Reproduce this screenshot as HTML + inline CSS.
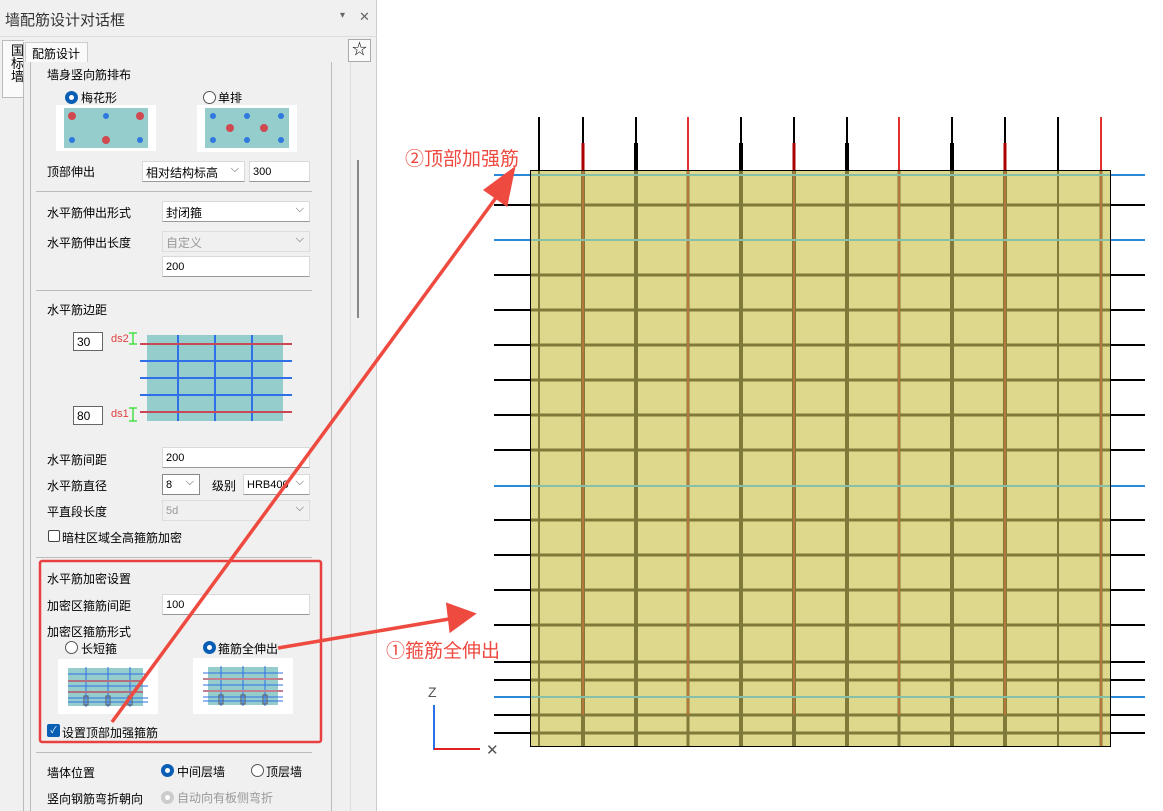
<!DOCTYPE html>
<html><head><meta charset="utf-8"><style>
*{margin:0;padding:0;box-sizing:border-box}
body{width:1163px;height:811px;overflow:hidden;background:#fff;font-family:"Liberation Sans","Noto Sans CJK SC",sans-serif;font-size:12px;color:#000;position:relative}
.a{position:absolute;white-space:nowrap}
.in{position:absolute;background:#fff;border:1px solid #d9d9d9;border-bottom:1px solid #999;height:21px;font-size:11px;padding:4px 3px 0;color:#000}
.dis{background:#f0f0f0;color:#999;border-color:#ddd}
.sel::after{content:"⌵";position:absolute;right:5px;top:1px;color:#555;font-size:11px}
.hr{position:absolute;left:36px;width:276px;height:1px;background:#bbb}
.rb{position:absolute;width:13px;height:13px;border-radius:50%;border:1px solid #555;background:#fff}
.rb.on{border:4px solid #0a5fb4}
</style></head><body>
<div class="a" style="left:0;top:0;width:377px;height:811px;background:#f0f0f0;border-right:1px solid #ccc"></div>
<div class="a" style="left:5px;top:9px;font-size:15px;color:#333">墙配筋设计对话框</div>
<div class="a" style="left:340px;top:10px;font-size:10px;color:#666">▾</div>
<div class="a" style="left:359px;top:9px;font-size:13px;color:#666">✕</div>
<div class="a" style="left:0;top:36px;width:377px;height:1px;background:#ddd"></div>
<div class="a" style="left:2px;top:40px;width:22px;height:58px;border:1px solid #bbb;border-right:none;background:#fafafa;font-size:13px;line-height:13px;padding:3px 0 0 8px;white-space:normal">国<br>标<br>墙</div>
<div class="a" style="left:23px;top:42px;width:1px;height:769px;background:#bbb"></div>
<div class="a" style="left:25px;top:42px;width:63px;height:20px;border:1px solid #ccc;border-bottom:none;background:#fafafa;font-size:12px;padding:2px 0 0 6px">配筋设计</div>
<div class="a" style="left:30px;top:62px;width:1px;height:749px;background:#bbb"></div>
<div class="a" style="left:331px;top:62px;width:1px;height:749px;background:#bbb"></div>
<div class="a" style="left:348px;top:39px;width:23px;height:23px;border:1px solid #aaa;background:#fafafa;font-size:15px;text-align:center;line-height:20px">☆</div>
<div class="a" style="left:350px;top:62px;width:1px;height:749px;background:#ddd"></div>
<div class="a" style="left:357px;top:160px;width:2px;height:158px;background:#888"></div>

<div class="a" style="left:47px;top:66px">墙身竖向筋排布</div>
<div class="rb on" style="left:65px;top:91px"></div><div class="a" style="left:81px;top:89px">梅花形</div>
<div class="rb" style="left:203px;top:91px"></div><div class="a" style="left:218px;top:89px">单排</div>
<svg class="a" style="left:56px;top:105px" width="100" height="46"><rect width="100" height="46" fill="#fff"/><rect x="8" y="3" width="84" height="40" fill="#95cdcd"/><g fill="#d04850"><circle cx="16" cy="11" r="4"/><circle cx="84" cy="11" r="4"/><circle cx="50" cy="35" r="4"/></g><g fill="#2f78e0"><circle cx="50" cy="11" r="3"/><circle cx="16" cy="35" r="3"/><circle cx="84" cy="35" r="3"/></g></svg>
<svg class="a" style="left:197px;top:105px" width="100" height="47"><rect width="100" height="47" fill="#fff"/><rect x="8" y="3" width="84" height="40" fill="#95cdcd"/><g fill="#2f78e0"><circle cx="16" cy="11" r="3"/><circle cx="50" cy="11" r="3"/><circle cx="84" cy="11" r="3"/><circle cx="16" cy="35" r="3"/><circle cx="50" cy="35" r="3"/><circle cx="84" cy="35" r="3"/></g><g fill="#d04850"><circle cx="33" cy="23" r="4"/><circle cx="67" cy="23" r="4"/></g></svg>
<div class="a" style="left:47px;top:163px">顶部伸出</div>
<div class="in sel" style="left:142px;top:161px;width:103px;font-size:12px;padding-top:2px">相对结构标高</div>
<div class="in" style="left:249px;top:161px;width:61px">300</div>
<div class="hr" style="top:191px"></div>
<div class="a" style="left:47px;top:204px">水平筋伸出形式</div>
<div class="in sel" style="left:162px;top:201px;width:148px;font-size:12px;padding-top:2px">封闭箍</div>
<div class="a" style="left:47px;top:234px">水平筋伸出长度</div>
<div class="in sel dis" style="left:162px;top:231px;width:148px;font-size:12px;padding-top:2px">自定义</div>
<div class="in" style="left:162px;top:256px;width:148px">200</div>
<div class="hr" style="top:290px"></div>
<div class="a" style="left:47px;top:301px">水平筋边距</div>
<div class="a" style="left:73px;top:332px;width:30px;height:19px;border:1px solid #666;background:#fff;font-size:12px;padding:2px 3px">30</div>
<div class="a" style="left:73px;top:406px;width:30px;height:19px;border:1px solid #666;background:#fff;font-size:12px;padding:2px 3px">80</div>
<div class="a" style="left:111px;top:333px;color:#e04040;font-size:11px">ds2</div>
<div class="a" style="left:111px;top:408px;color:#e04040;font-size:11px">ds1</div>
<svg class="a" style="left:125px;top:330px" width="170" height="95"><rect x="22" y="5" width="136" height="86" fill="#95cdcd"/><g stroke="#2f6fe8" stroke-width="2"><line x1="53" y1="5" x2="53" y2="91"/><line x1="90" y1="5" x2="90" y2="91"/><line x1="127" y1="5" x2="127" y2="91"/><line x1="15" y1="31" x2="167" y2="31"/><line x1="15" y1="48" x2="167" y2="48"/><line x1="15" y1="65" x2="167" y2="65"/></g><g stroke="#c84858" stroke-width="2"><line x1="15" y1="14" x2="167" y2="14"/><line x1="15" y1="82" x2="167" y2="82"/></g><g stroke="#22dd22" stroke-width="1.2"><line x1="8" y1="3" x2="8" y2="14"/><line x1="4" y1="3" x2="12" y2="3"/><line x1="4" y1="14" x2="12" y2="14"/><line x1="8" y1="78" x2="8" y2="91"/><line x1="4" y1="78" x2="12" y2="78"/><line x1="4" y1="91" x2="12" y2="91"/></g></svg>
<div class="a" style="left:47px;top:451px">水平筋间距</div>
<div class="in" style="left:162px;top:447px;width:148px">200</div>
<div class="a" style="left:47px;top:477px">水平筋直径</div>
<div class="in sel" style="left:162px;top:474px;width:38px;border:1px solid #888">8</div>
<div class="a" style="left:212px;top:477px">级别</div>
<div class="in sel" style="left:243px;top:474px;width:67px">HRB400</div>
<div class="a" style="left:47px;top:503px">平直段长度</div>
<div class="in sel dis" style="left:162px;top:500px;width:148px">5d</div>
<div class="a" style="left:48px;top:530px;width:12px;height:12px;border:1px solid #444;border-radius:2px;background:#fff"></div>
<div class="a" style="left:62px;top:529px">暗柱区域全高箍筋加密</div>
<div class="hr" style="top:557px"></div>
<div class="a" style="left:47px;top:570px">水平筋加密设置</div>
<div class="a" style="left:47px;top:597px">加密区箍筋间距</div>
<div class="in" style="left:162px;top:594px;width:148px">100</div>
<div class="a" style="left:47px;top:623px">加密区箍筋形式</div>
<div class="rb" style="left:65px;top:641px"></div><div class="a" style="left:81px;top:640px">长短箍</div>
<div class="rb on" style="left:203px;top:641px"></div><div class="a" style="left:218px;top:640px">箍筋全伸出</div>
<svg class="a" style="left:58px;top:659px" width="100" height="55"><rect width="100" height="55" fill="#fff"/><rect x="10" y="9" width="75" height="38" fill="#95cdcd"/><g stroke="#2f6fe8" stroke-width="1"><line x1="28" y1="8" x2="28" y2="48"/><line x1="50" y1="8" x2="50" y2="48"/><line x1="72" y1="8" x2="72" y2="48"/><line x1="10" y1="15" x2="90" y2="15"/><line x1="10" y1="27" x2="90" y2="27"/><line x1="10" y1="39" x2="90" y2="39"/><line x1="10" y1="43" x2="90" y2="43"/></g><g stroke="#b07080" stroke-width="2"><line x1="10" y1="22" x2="85" y2="22"/><line x1="10" y1="33" x2="85" y2="33"/></g><g fill="none" stroke="#556"><rect x="26" y="37" width="4" height="9"/><rect x="48" y="37" width="4" height="9"/><rect x="70" y="37" width="4" height="9"/></g></svg>
<svg class="a" style="left:193px;top:658px" width="100" height="56"><rect width="100" height="56" fill="#fff"/><rect x="15" y="9" width="70" height="38" fill="#95cdcd"/><g stroke="#2f6fe8" stroke-width="1"><line x1="28" y1="8" x2="28" y2="48"/><line x1="50" y1="8" x2="50" y2="48"/><line x1="72" y1="8" x2="72" y2="48"/><line x1="10" y1="15" x2="90" y2="15"/><line x1="10" y1="27" x2="90" y2="27"/><line x1="10" y1="39" x2="90" y2="39"/><line x1="10" y1="43" x2="90" y2="43"/></g><g stroke="#c08090" stroke-width="2"><line x1="10" y1="21" x2="90" y2="21"/><line x1="10" y1="33" x2="90" y2="33"/></g><g fill="none" stroke="#556"><rect x="26" y="37" width="4" height="9"/><rect x="48" y="37" width="4" height="9"/><rect x="70" y="37" width="4" height="9"/></g></svg>
<div class="a" style="left:47px;top:724px;width:13px;height:13px;background:#0a5fb4;border-radius:2px;color:#fff;font-size:9px;text-align:center;line-height:13px">✓</div>
<div class="a" style="left:62px;top:724px">设置顶部加强箍筋</div>
<div class="hr" style="top:752px"></div>
<div class="a" style="left:47px;top:764px">墙体位置</div>
<div class="rb on" style="left:161px;top:764px"></div><div class="a" style="left:177px;top:763px">中间层墙</div>
<div class="rb" style="left:251px;top:764px"></div><div class="a" style="left:266px;top:763px">顶层墙</div>
<div class="a" style="left:47px;top:790px">竖向钢筋弯折朝向</div>
<div class="rb" style="left:161px;top:791px;border:4px solid #ccc"></div><div class="a" style="left:177px;top:789px;color:#999">自动向有板侧弯折</div>

<svg class="a" style="left:0;top:0" width="1163" height="811">
<g stroke="#000" stroke-width="2">
<line x1="494" y1="205" x2="1145" y2="205"/><line x1="494" y1="275" x2="1145" y2="275"/><line x1="494" y1="310" x2="1145" y2="310"/><line x1="494" y1="345" x2="1145" y2="345"/><line x1="494" y1="380" x2="1145" y2="380"/><line x1="494" y1="415" x2="1145" y2="415"/><line x1="494" y1="450" x2="1145" y2="450"/><line x1="494" y1="520" x2="1145" y2="520"/><line x1="494" y1="555" x2="1145" y2="555"/><line x1="494" y1="590" x2="1145" y2="590"/><line x1="494" y1="625" x2="1145" y2="625"/><line x1="494" y1="662" x2="1145" y2="662"/><line x1="494" y1="680" x2="1145" y2="680"/><line x1="494" y1="715" x2="1145" y2="715"/><line x1="494" y1="733" x2="1145" y2="733"/>
</g>
<g stroke="#2a8ad8" stroke-width="2"><line x1="494" y1="175" x2="1145" y2="175"/><line x1="494" y1="240" x2="1145" y2="240"/><line x1="494" y1="486" x2="1145" y2="486"/><line x1="494" y1="697" x2="1145" y2="697"/></g>
<g stroke="#000"><line x1="539" y1="117" x2="539" y2="170" stroke-width="2"/><line x1="1058" y1="117" x2="1058" y2="170" stroke-width="2"/><line x1="636" y1="117" x2="636" y2="170" stroke-width="2"/><line x1="636" y1="143" x2="636" y2="170" stroke-width="4"/><line x1="741" y1="117" x2="741" y2="170" stroke-width="2"/><line x1="741" y1="143" x2="741" y2="170" stroke-width="4"/><line x1="847" y1="117" x2="847" y2="170" stroke-width="2"/><line x1="847" y1="143" x2="847" y2="170" stroke-width="4"/><line x1="952" y1="117" x2="952" y2="170" stroke-width="2"/><line x1="952" y1="143" x2="952" y2="170" stroke-width="4"/>
<line x1="583" y1="117" x2="583" y2="170" stroke-width="2"/><line x1="794" y1="117" x2="794" y2="170" stroke-width="2"/><line x1="1005" y1="117" x2="1005" y2="170" stroke-width="2"/></g>
<g stroke="#a00" stroke-width="3"><line x1="583" y1="143" x2="583" y2="170"/><line x1="794" y1="143" x2="794" y2="170"/><line x1="1005" y1="143" x2="1005" y2="170"/></g>
<g stroke="#e03030" stroke-width="2"><line x1="688" y1="117" x2="688" y2="170"/><line x1="899" y1="117" x2="899" y2="170"/><line x1="1101" y1="117" x2="1101" y2="170"/></g>
<rect x="530.5" y="170.5" width="580" height="576" fill="#ded88c" stroke="#000"/>
<g stroke="#807a3a" stroke-width="3">
<line x1="531" y1="205" x2="1110" y2="205"/><line x1="531" y1="275" x2="1110" y2="275"/><line x1="531" y1="310" x2="1110" y2="310"/><line x1="531" y1="345" x2="1110" y2="345"/><line x1="531" y1="380" x2="1110" y2="380"/><line x1="531" y1="415" x2="1110" y2="415"/><line x1="531" y1="450" x2="1110" y2="450"/><line x1="531" y1="520" x2="1110" y2="520"/><line x1="531" y1="555" x2="1110" y2="555"/><line x1="531" y1="590" x2="1110" y2="590"/><line x1="531" y1="625" x2="1110" y2="625"/><line x1="531" y1="662" x2="1110" y2="662"/><line x1="531" y1="680" x2="1110" y2="680"/><line x1="531" y1="715" x2="1110" y2="715"/><line x1="531" y1="733" x2="1110" y2="733"/>
<line x1="539" y1="171" x2="539" y2="746" stroke-width="2"/><line x1="636" y1="171" x2="636" y2="746" stroke-width="4"/><line x1="741" y1="171" x2="741" y2="746" stroke-width="4"/><line x1="847" y1="171" x2="847" y2="746" stroke-width="4"/><line x1="952" y1="171" x2="952" y2="746" stroke-width="4"/><line x1="1058" y1="171" x2="1058" y2="746" stroke-width="2"/>
<line x1="583" y1="171" x2="583" y2="746" stroke-width="4"/><line x1="688" y1="171" x2="688" y2="746"/><line x1="794" y1="171" x2="794" y2="746" stroke-width="4"/><line x1="899" y1="171" x2="899" y2="746"/><line x1="1005" y1="171" x2="1005" y2="746" stroke-width="4"/><line x1="1101" y1="171" x2="1101" y2="746"/>
</g>
<g stroke="#c8783a" stroke-width="1.5"><line x1="583" y1="171" x2="583" y2="715"/><line x1="688" y1="171" x2="688" y2="715"/><line x1="794" y1="171" x2="794" y2="715"/><line x1="899" y1="171" x2="899" y2="715"/><line x1="1005" y1="171" x2="1005" y2="715"/><line x1="1101" y1="171" x2="1101" y2="746"/></g>
<g stroke="#86c0a8" stroke-width="2"><line x1="531" y1="175" x2="1110" y2="175"/><line x1="531" y1="240" x2="1110" y2="240"/><line x1="531" y1="486" x2="1110" y2="486"/><line x1="531" y1="697" x2="1110" y2="697"/></g>
<line x1="434" y1="705" x2="434" y2="750" stroke="#2a6fe8" stroke-width="2"/>
<line x1="434" y1="749" x2="480" y2="749" stroke="#e02020" stroke-width="2"/>
<text x="428" y="697" font-size="14" fill="#555" font-family="Liberation Sans">Z</text>
<text x="486" y="755" font-size="15" fill="#555" font-family="Liberation Sans">✕</text>
<rect x="40" y="561" width="281" height="181" rx="2" fill="none" stroke="#e84040" stroke-width="2.5"/>
<g stroke="#ee4a40" stroke-width="3.5" fill="#ee4a40">
<line x1="112" y1="722" x2="498" y2="195"/><polygon points="513,170 486,190 506,204"/>
<line x1="278" y1="648" x2="455" y2="618"/><polygon points="473,614 448,605 451,630"/>
</g>
<text x="405" y="165" font-size="19" fill="#ee4a40" font-family="Liberation Sans,Noto Sans CJK SC">②顶部加强筋</text>
<text x="386" y="657" font-size="19" fill="#ee4a40" font-family="Liberation Sans,Noto Sans CJK SC">①箍筋全伸出</text>
</svg>
</body></html>
